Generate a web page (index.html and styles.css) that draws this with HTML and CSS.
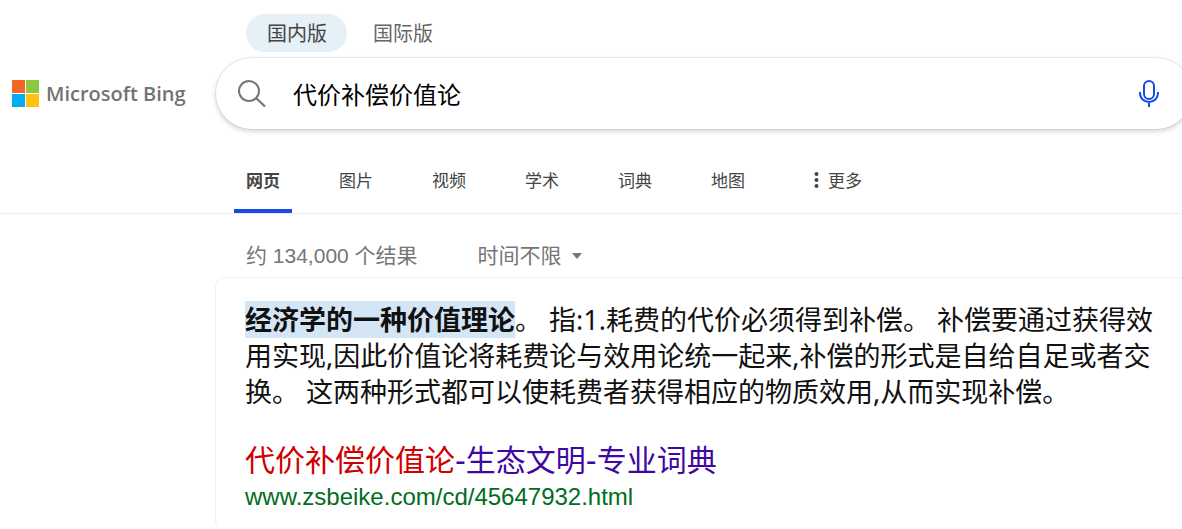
FILE: index.html
```html
<!DOCTYPE html>
<html lang="zh-CN">
<head>
<meta charset="utf-8">
<title>代价补偿价值论 - Microsoft Bing</title>
<link rel="stylesheet" href="styles.css">
</head>
<body>
<div class="page">
  <header class="header">
    <div class="versions">
      <button type="button" class="version version-active">国内版</button>
      <button type="button" class="version">国际版</button>
    </div>
    <a href="#" class="logo">
      <svg class="logo-mark" viewBox="0 0 27 27" aria-hidden="true">
        <path fill="#f26522" d="M0 0h13v13H0z"/>
        <path fill="#8dc63f" d="M14 0h13v13H14z"/>
        <path fill="#00aeef" d="M0 14h13v13H0z"/>
        <path fill="#ffc20e" d="M14 14h13v13H14z"/>
      </svg>
      <span class="logo-name">Microsoft Bing</span>
    </a>
    <form class="search" role="search">
      <button type="submit" class="icon-button" aria-label="搜索">
        <svg class="search-icon" viewBox="0 0 28 28" fill="none" stroke="#767676" stroke-width="2" aria-hidden="true">
          <circle cx="11" cy="11" r="10"/>
          <path d="M18 18l9 8.500" stroke-width="2.300"/>
        </svg>
      </button>
      <input class="search-input" type="text" aria-label="搜索内容" value="代价补偿价值论">
      <button type="button" class="icon-button" aria-label="语音搜索">
        <svg class="mic-icon" viewBox="0 0 20 28" fill="none" stroke="#174ae4" stroke-width="2" aria-hidden="true">
          <rect x="5" y="1" width="10" height="18" rx="5"/>
          <path d="M1 12v1c0 5.500 4 9 9 9s9-3.500 9-9v-1M10 22v5"/>
        </svg>
      </button>
    </form>
  </header>
  <nav class="tabs">
    <a href="#" class="tab tab-active">网页</a>
    <a href="#" class="tab">图片</a>
    <a href="#" class="tab">视频</a>
    <a href="#" class="tab">学术</a>
    <a href="#" class="tab">词典</a>
    <a href="#" class="tab">地图</a>
    <a href="#" class="tab tab-more">
      <svg class="dots" viewBox="0 0 4 16" fill="#444" aria-hidden="true">
        <circle cx="2" cy="2" r="2"/><circle cx="2" cy="8" r="2"/><circle cx="2" cy="14" r="2"/>
      </svg>更多</a>
  </nav>
  <main class="results">
    <div class="meta">
      <span>约 134,000 个结果</span>
      <button type="button" class="filter">时间不限
        <svg class="caret" viewBox="0 0 10 6" fill="#767676" aria-hidden="true"><path d="M0 0h10L5 6z"/></svg>
      </button>
    </div>
    <article class="card">
      <p class="snippet"><strong class="mark">经济学的一种价值理论</strong>。 指:1.耗费的代价必须得到补偿。 补偿要通过获得效用实现,因此价值论将耗费论与效用论统一起来,补偿的形式是自给自足或者交换。 这两种形式都可以使耗费者获得相应的物质效用,从而实现补偿。</p>
      <h2 class="title"><a href="#"><span class="match">代价补偿价值论</span>-生态文明-专业词典</a></h2>
      <cite class="url">www.zsbeike.com/cd/45647932.html</cite>
    </article>
  </main>
</div>
</body>
</html>
```

FILE: styles.css
```css
* {
  box-sizing: border-box;
}

body {
  margin: 0;
  background: #fff;
  font-family: "Liberation Sans", "Noto Sans CJK SC", sans-serif;
}

a {
  color: inherit;
  text-decoration: none;
}

button {
  border: 0;
  padding: 0;
  background: none;
  color: inherit;
  font: inherit;
  cursor: pointer;
}

.page {
  overflow: hidden;
}

.header {
  display: grid;
  grid-template-columns: 204px 1fr;
  align-items: center;
  row-gap: 6px;
  padding: 14px 0 0 12px;
}

.versions {
  grid-column: 2;
  display: flex;
  gap: 5px;
  padding-left: 30px;
}

.version {
  height: 38px;
  padding: 2px 20px 0 21px;
  border-radius: 19px;
  color: #666;
  font-size: 20px;
  line-height: 36px;
}

.version-active {
  background: #e5f1f6;
  color: #444;
}

.logo {
  display: flex;
  align-items: center;
  gap: 7px;
  color: #737373;
}

.logo-mark {
  width: 27px;
  height: 27px;
}

.logo-name {
  font-family: "Open Sans", "Noto Sans", sans-serif;
  font-size: 20px;
  font-weight: 600;
  line-height: 28px;
  white-space: nowrap;
}

.search {
  display: flex;
  align-items: center;
  height: 71px;
  margin-right: -10px;
  padding: 0 33px 0 22px;
  border-radius: 36px;
  background: #fff;
  box-shadow: 0 0 0 1px rgba(0, 0, 0, 0.05), 0 2px 4px 1px rgba(0, 0, 0, 0.14);
}

.icon-button {
  display: flex;
}

.search-icon {
  width: 28px;
  height: 28px;
}

.mic-icon {
  width: 20px;
  height: 28px;
}

.search-input {
  flex: 1;
  min-width: 0;
  height: 48px;
  padding: 0 27px;
  border: 0;
  outline: 0;
  background: none;
  color: #000;
  font: inherit;
  font-size: 24px;
}

.tabs {
  display: flex;
  gap: 35px;
  margin-top: 32px;
  padding-left: 234px;
  border-bottom: 1px solid #ececec;
  color: #444;
  font-size: 17px;
  line-height: 42px;
}

.tab {
  height: 52px;
  padding: 0 12px;
  border-bottom: 4px solid transparent;
  white-space: nowrap;
}

.tab-active {
  border-color: #174ae4;
  font-weight: 700;
}

.tab-more {
  display: flex;
  gap: 9px;
  padding-left: 22px;
}

.dots {
  width: 5px;
  height: 16px;
  margin-top: 11px;
}

.results {
  padding-left: 215px;
}

.meta {
  display: flex;
  gap: 60px;
  padding: 26px 31px 5px;
  color: #767676;
  font-size: 21px;
  line-height: 32px;
}

.filter {
  display: flex;
  align-items: center;
  gap: 10px;
}

.caret {
  width: 10px;
  height: 6px;
}

.card {
  margin-right: -10px;
  padding: 24px 34px 18px 29px;
  border: 1px solid #f0f0f0;
  border-bottom: 0;
  border-radius: 10px;
}

.snippet {
  margin: 0;
  color: #111;
  font-family: "Noto Sans", "Noto Sans CJK SC", sans-serif;
  font-size: 27px;
  line-height: 36px;
}

.mark {
  background: #d4e6f5;
}

.title {
  margin: 31px 0 0;
  color: #4007a2;
  font-family: "DejaVu Sans", "Noto Sans CJK SC", sans-serif;
  font-size: 30px;
  font-weight: 400;
  line-height: 40px;
}

.match {
  color: #d00000;
}

.url {
  display: block;
  color: #006d21;
  font-size: 24px;
  font-style: normal;
  line-height: 32px;
}
```
